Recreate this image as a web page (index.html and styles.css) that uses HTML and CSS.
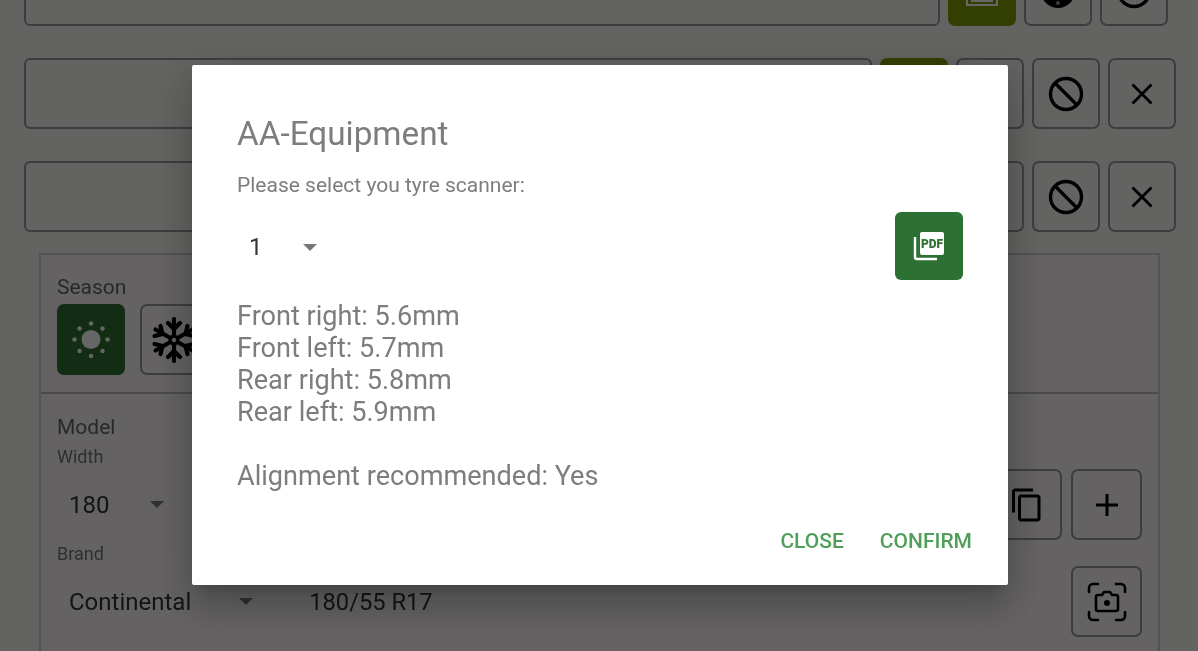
FILE: index.html
```html
<!DOCTYPE html>
<html lang="en">
<head>
  <meta charset="UTF-8">
  <title>AA-Equipment</title>
  <link rel="stylesheet" href="styles.css">
</head>
<body>
<div class="app">
  <div class="row row-first">
    <div class="field"></div>
    <div class="icon-btn green">
      <svg width="40" height="40" viewBox="0 0 40 40"><rect x="5" y="2" width="30" height="32" fill="none" stroke="#fff" stroke-width="2"/><rect x="10" y="8" width="20" height="22" fill="none" stroke="#fff" stroke-width="2"/></svg>
    </div>
    <div class="icon-btn">
      <svg width="40" height="40" viewBox="0 0 40 40"><circle cx="20" cy="20" r="17"/><circle cx="20" cy="32" r="2" fill="#999"/></svg>
    </div>
    <div class="icon-btn">
      <svg width="40" height="40" viewBox="0 0 40 40"><circle cx="20" cy="20" r="15.5" fill="none" stroke="#000" stroke-width="3.4"/></svg>
    </div>
  </div>

  <div class="row">
    <div class="field"></div>
    <div class="icon-btn green"></div>
    <div class="icon-btn"></div>
    <div class="icon-btn">
      <svg width="40" height="40" viewBox="0 0 40 40" fill="none" stroke="#000" stroke-width="3.4"><circle cx="20" cy="20" r="15.5"/><path d="M9 9l22 22"/></svg>
    </div>
    <div class="icon-btn">
      <svg width="34" height="34" viewBox="0 0 34 34" fill="none" stroke="#000" stroke-width="2.8"><path d="M7.5 7.5l19 19M26.500 7.500l-19 19"/></svg>
    </div>
  </div>

  <div class="row">
    <div class="field"></div>
    <div class="icon-btn"></div>
    <div class="icon-btn"></div>
    <div class="icon-btn">
      <svg width="40" height="40" viewBox="0 0 40 40" fill="none" stroke="#000" stroke-width="3.4"><circle cx="20" cy="20" r="15.500"/><path d="M9 9l22 22"/></svg>
    </div>
    <div class="icon-btn">
      <svg width="34" height="34" viewBox="0 0 34 34" fill="none" stroke="#000" stroke-width="2.8"><path d="M7.5 7.5l19 19M26.500 7.500l-19 19"/></svg>
    </div>
  </div>

  <div class="panel">
    <div class="season">
      <div class="label">Season</div>
      <div class="season-btns">
        <div class="icon-btn small dark">
          <svg width="40" height="40" viewBox="0 0 40 40" fill="#fff"><circle cx="20" cy="19.500" r="9.500"/><circle cx="20" cy="3.500" r="2.200"/><circle cx="20" cy="36" r="2.200"/><circle cx="3.500" cy="19.500" r="2.200"/><circle cx="36.500" cy="19.500" r="2.200"/><circle cx="8.500" cy="8.500" r="2.200"/><circle cx="31.500" cy="8.500" r="2.200"/><circle cx="8.500" cy="31" r="2.200"/><circle cx="31.500" cy="31" r="2.200"/></svg>
        </div>
        <div class="icon-btn small">
          <svg width="46" height="46" viewBox="0 0 46 46" fill="none" stroke="#000" stroke-width="4.200" stroke-linecap="round"><circle cx="23" cy="23" r="4" stroke-width="3"/><path d="M23 2v17M23 27v17M17 6l6 6 6-6M17 40l6-6 6 6"/><path d="M4.500 12.500l15 8.500M26.500 25l15 8.500M3.500 19l8 -2 -2 -8M42.500 27l-8 2 2 8"/><path d="M41.500 12.500l-15 8.500M19.500 25l-15 8.500M42.500 19l-8 -2 2 -8M3.500 27l8 2 -2 8"/></svg>
        </div>
      </div>
    </div>
    <div class="model">
      <div class="label label-model">Model</div>
      <div class="label-small">Width</div>
      <div class="model-row">
        <div class="select select-width">180<span class="caret"></span></div>
        <div class="icon-btn square">
          <svg width="36" height="36" viewBox="0 0 24 24"><path d="M16 1H4c-1.100 0-2 .9-2 2v14h2V3h12V1zm3 4H8c-1.100 0-2 .9-2 2v14c0 1.100.9 2 2 2h11c1.100 0 2-.9 2-2V7c0-1.100-.9-2-2-2zm0 16H8V7h11v14z"/></svg>
        </div>
        <div class="icon-btn square">
          <svg width="36" height="36" viewBox="0 0 36 36" fill="none" stroke="#000" stroke-width="3"><path d="M18 7v22M7 18h22"/></svg>
        </div>
      </div>
      <div class="label-small brand">Brand</div>
      <div class="model-row">
        <div class="select select-brand">Continental<span class="caret"></span></div>
        <div class="size">180/55 R17</div>
        <div class="icon-btn square">
          <svg width="48" height="48" viewBox="0 0 48 48" fill="none" stroke="#000" stroke-width="2.600" stroke-linecap="round" stroke-linejoin="round"><path d="M6 14v-4a4 4 0 0 1 4-4h5M33 6h5a4 4 0 0 1 4 4v4M42 34v4a4 4 0 0 1-4 4h-5M15 42h-5a4 4 0 0 1-4-4v-4"/><path d="M13 19a2 2 0 0 1 2-2h4l2-3h6l2 3h4a2 2 0 0 1 2 2v12a2 2 0 0 1-2 2H15a2 2 0 0 1-2-2z"/><circle cx="24" cy="25" r="3" fill="#000" stroke="none"/></svg>
        </div>
      </div>
    </div>
  </div>
</div>

<div class="overlay">
  <div class="dialog">
    <h2 class="dialog-title">AA-Equipment</h2>
    <p class="dialog-sub">Please select you tyre scanner:</p>
    <div class="scanner-row">
      <div class="select select-scanner">1<span class="caret"></span></div>
      <div class="pdf-btn">
        <svg width="32" height="32" viewBox="0 0 32 32"><path d="M2 7v20a2 2 0 0 0 2 2h20" fill="none" stroke="#fff" stroke-width="2.400"/><rect x="7" y="2" width="24" height="23" rx="2" fill="#fff"/><text x="19" y="18" class="pdf-text">PDF</text></svg>
      </div>
    </div>
    <div class="readings">
      <div>Front right: 5.6mm</div>
      <div>Front left: 5.7mm</div>
      <div>Rear right: 5.8mm</div>
      <div>Rear left: 5.9mm</div>
      <div class="readings-gap">Alignment recommended: Yes</div>
    </div>
    <div class="actions">
      <span class="action">Close</span>
      <span class="action">Confirm</span>
    </div>
  </div>
</div>
</body>
</html>
```

FILE: styles.css
```css
html, body {
  margin: 0;
  height: 100%;
  overflow: hidden;
}
body {
  font-family: Roboto, sans-serif;
  background: #f8faf5;
  color: #111;
}
.app {
  height: 696px;
  overflow: hidden;
  margin-top: -45px;
  padding: 0 22px 0 24px;
  filter: blur(0.6px);
}
.row {
  display: flex;
  gap: 8px;
  height: 71px;
  margin-bottom: 32px;
}
.row-first {
  padding-right: 8px;
}
.field {
  flex: 1;
  border: 2px solid #999;
  border-radius: 6px;
  box-sizing: border-box;
}
.icon-btn {
  width: 68px;
  height: 71px;
  box-sizing: border-box;
  border: 2px solid #999;
  border-radius: 7px;
  display: flex;
  align-items: center;
  justify-content: center;
  flex: none;
}
.icon-btn.green {
  background: #7f9f00;
  border-color: #7f9f00;
}
.icon-btn.dark {
  background: #2d7033;
  border-color: #2d7033;
}
.icon-btn.square {
  width: 71px;
}
.panel {
  margin: -11px 16px 0 15px;
  height: 420px;
  border: 2px solid #d2cdd0;
  border-bottom: 0;
  background: #faf5f8;
}
.season {
  height: 139px;
  box-sizing: border-box;
  padding: 19px 15px 0 16px;
  border-bottom: 2px solid #bdb9bb;
}
.label {
  font-size: 21px;
  line-height: 26px;
  color: #666;
}
.label-model {
  margin-bottom: 7px;
}
.season-btns {
  display: flex;
  gap: 15px;
  margin-top: 4px;
}
.model {
  padding: 20px 16px 0 16px;
}
.label-small {
  font-size: 18px;
  line-height: 20px;
  color: #777;
}
.model-row {
  display: flex;
  align-items: center;
  gap: 9px;
}
.model .label-small:not(.brand) {
  margin-bottom: 2px;
}
.brand {
  margin: 4px 0 2px;
}
.select {
  display: flex;
  align-items: center;
  font-size: 24px;
  color: #333;
  padding-left: 12px;
}
.caret {
  width: 0;
  height: 0;
  border: 7px solid transparent;
  border-top-color: #777;
  border-bottom: 0;
}
.select-width {
  width: 121px;
  margin-right: auto;
  justify-content: space-between;
  box-sizing: border-box;
  padding-right: 14px;
}
.select-brand {
  gap: 48px;
}
.size {
  font-size: 23.700px;
  color: #333;
  margin-left: 47px;
  margin-right: auto;
}
.overlay {
  position: fixed;
  inset: 0;
  background: rgba(0, 0, 0, 0.6);
  display: flex;
  align-items: center;
  justify-content: center;
  padding: 0 0 1px 2px;
}
.dialog {
  width: 816px;
  height: 520px;
  box-sizing: border-box;
  padding: 51px 45px 0;
  background: #fff;
  border-radius: 2px;
  color: #7d7d7d;
  box-shadow: 0 11px 15px -7px rgba(0,0,0,.2), 0 24px 38px 3px rgba(0,0,0,.14), 0 9px 46px 8px rgba(0,0,0,.12);
}
.dialog-title {
  margin: 0;
  font-size: 33.300px;
  line-height: 36px;
  font-weight: 400;
  filter: blur(0.4px);
}
.dialog-sub {
  margin: 19px 0 0;
  font-size: 21px;
  line-height: 28px;
  filter: blur(0.4px);
}
.scanner-row {
  display: flex;
  align-items: center;
  justify-content: space-between;
  margin-top: 13px;
}
.select-scanner {
  gap: 40px;
  padding-top: 2px;
}
.pdf-btn {
  width: 68px;
  height: 68px;
  background: #2d7033;
  border-radius: 6px;
  display: flex;
  align-items: center;
  justify-content: center;
}
.pdf-text {
  font-size: 12px;
  font-weight: 900;
  fill: #2d7033;
  text-anchor: middle;
  font-family: Roboto, sans-serif;
}
.readings {
  margin-top: 20px;
  font-size: 27.100px;
  line-height: 32px;
  filter: blur(0.4px);
}
.readings-gap {
  margin-top: 32px;
}
.actions {
  display: flex;
  justify-content: flex-end;
  gap: 36px;
  margin: 34px -9px 0 0;
  filter: blur(0.4px);
}
.action {
  color: #4f9f5a;
  font-size: 21px;
  font-weight: 500;
  line-height: 30px;
  text-transform: uppercase;
}
```
